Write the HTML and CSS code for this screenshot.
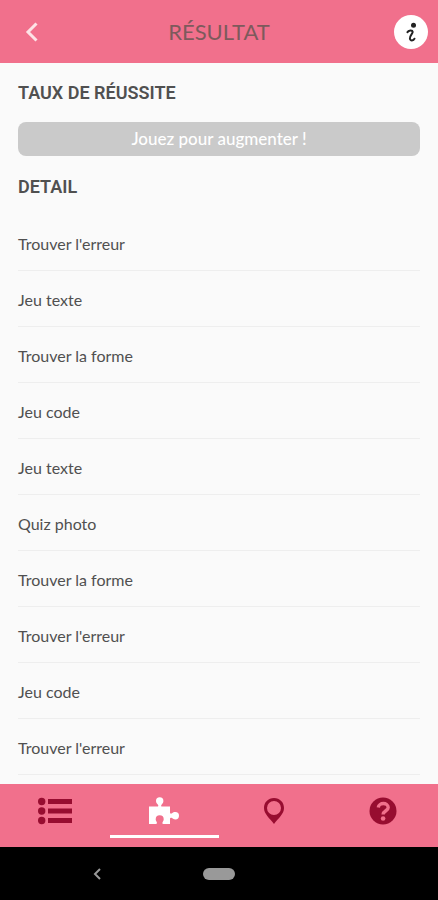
FILE: index.html
```html
<!DOCTYPE html>
<html lang="fr">
<head>
    <meta charset="UTF-8">
    <meta name="viewport" content="width=device-width, initial-scale=1.0">
    <title>Résultat</title>
    <link rel="stylesheet" href="styles.css">
</head>
<body>
    <header class="topbar">
        <button class="iconbtn" type="button" aria-label="Retour">
            <svg width="14" height="20" viewBox="0 0 14 20"><path d="M11.500 1.500 3 10l8.500 8.500" fill="none" stroke="#fde3e6" stroke-width="3"/></svg>
        </button>
        <h1 class="title">RÉSULTAT</h1>
        <button class="iconbtn infobtn" type="button" aria-label="Informations">
            <svg width="34" height="34" viewBox="0 0 34 34">
                <circle cx="17" cy="17" r="17" fill="#fff"/>
                <circle cx="19.500" cy="10.300" r="2.500" fill="#222"/>
                <path d="M13.400 17.200c1-2 5-2.600 5.300-.3.200 1.700-3.200 3.800-2.800 6.600.3 2.600 3.600 2.500 4.600.2" fill="none" stroke="#222" stroke-width="2" stroke-linecap="round"/>
            </svg>
        </button>
    </header>

    <main class="content">
        <h2 class="subtitle">TAUX DE RÉUSSITE</h2>
        <div class="rate">Jouez pour augmenter !</div>
        <h2 class="subtitle">DETAIL</h2>
        <ul class="games">
            <li class="game">Trouver l'erreur</li>
            <li class="game">Jeu texte</li>
            <li class="game">Trouver la forme</li>
            <li class="game">Jeu code</li>
            <li class="game">Jeu texte</li>
            <li class="game">Quiz photo</li>
            <li class="game">Trouver la forme</li>
            <li class="game">Trouver l'erreur</li>
            <li class="game">Jeu code</li>
            <li class="game">Trouver l'erreur</li>
        </ul>
    </main>

    <nav class="tabs">
        <a class="tab" href="#" aria-label="Liste">
            <svg width="34" height="28" viewBox="0 0 34 28" fill="#970d30">
                <circle cx="3.700" cy="4.500" r="3.700"/><circle cx="3.700" cy="14" r="3.700"/><circle cx="3.700" cy="23.500" r="3.700"/>
                <path d="M10 2h24v5H10zM10 11.500h24v5H10zM10 21h24v5H10z"/>
            </svg>
        </a>
        <a class="tab active" href="#" aria-label="Jeux">
            <svg width="30" height="28" viewBox="0 0 30 28" fill="#fff">
                <path d="M0 9.500h8.500c.8 0 1-.8.600-1.600C8.200 6.800 7 5.700 7 4a3.700 3.700 0 0 1 7.400 0c0 1.700-1.200 2.800-2 3.900-.5.800-.3 1.600.6 1.600h8v6c0 1.200 1 1.500 2 .8 1-.8 1.800-1.300 3.300-1.300a3.700 3.700 0 0 1 0 7.400c-1.500 0-2.300-.6-3.300-1.300-1-.7-2-.4-2 .7V27h-6.500c-1.300 0-1.400-1-.8-2 .5-.8 1-1.500 1-2.700a4 4 0 0 0-8 0c0 1.200.5 1.900 1 2.700.5 1 .3 2-1 2H0z"/>
            </svg>
        </a>
        <a class="tab" href="#" aria-label="Carte">
            <svg width="22" height="28" viewBox="0 0 22 28" fill="#970d30">
                <path fill-rule="evenodd" d="M11 1C5.200 1 1 5.400 1 11c0 6 5.500 10 10 16 4.500-6 10-10 10-16 0-5.600-4.200-10-10-10zm0 3a7 7 0 1 1 0 14 7 7 0 0 1 0-14z"/>
            </svg>
        </a>
        <a class="tab" href="#" aria-label="Aide">
            <svg width="28" height="28" viewBox="0 0 28 28">
                <circle cx="14" cy="14" r="13.500" fill="#970d30"/>
                <path d="M9.300 10.500c.5-5.300 9.800-5.300 9.900 0 .1 3.300-4.900 3.200-5.100 7" fill="none" stroke="#f1708c" stroke-width="3.400"/>
                <circle cx="14.100" cy="21.500" r="2.300" fill="#f1708c"/>
            </svg>
        </a>
    </nav>

    <div class="system">
        <button class="iconbtn" type="button" aria-label="Précédent">
            <svg width="8" height="12" viewBox="0 0 8 12"><path d="M7 1 2 6l5 5" fill="none" stroke="#999" stroke-width="2"/></svg>
        </button>
        <button class="iconbtn" type="button" aria-label="Accueil"><span class="pill"></span></button>
    </div>
</body>
</html>
```
FILE: styles.css
```css
* {
    box-sizing: border-box;
}

body {
    margin: 0;
    min-height: 100vh;
    display: flex;
    flex-direction: column;
    background-color: #fafafa;
    color: #505050;
    font-family: Lato, sans-serif;
}

.iconbtn {
    display: flex;
    align-items: center;
    justify-content: center;
    padding: 0;
    border: none;
    background: none;
}

/* top bar */
.topbar {
    display: grid;
    grid-template-columns: 44px 1fr 44px;
    align-items: center;
    height: 63px;
    padding: 0 10px;
    background-color: #f1708c;
}

.infobtn {
    justify-content: flex-end;
}

.title {
    margin: 0;
    text-align: center;
    font-size: 22px;
    font-weight: 400;
    line-height: 28px;
    color: #7d5a5c;
}

/* results */
.content {
    flex: 1;
    padding: 18px 18px 8px;
}

.subtitle {
    margin: 0;
    font-family: Roboto, sans-serif;
    font-size: 18px;
    font-weight: 600;
    line-height: 24px;
}

.rate {
    margin: 17px 0 19px;
    border-radius: 8px;
    background-color: #cacaca;
    color: #fff;
    text-align: center;
    font-size: 17px;
    font-weight: 500;
    line-height: 34px;
}

.games {
    list-style: none;
    margin: 16px 0 0;
    padding: 0;
}

.game {
    padding: 17px 0 14px;
    border-bottom: 1px solid #eee;
    font-size: 16px;
    line-height: 24px;
}

/* bottom tabs */
.tabs {
    display: grid;
    grid-template-columns: repeat(4, 1fr);
    height: 63px;
    padding-bottom: 9px;
    background-color: #f1708c;
}

.tab {
    display: flex;
    align-items: center;
    justify-content: center;
    padding-top: 3px;
    border-bottom: 3px solid transparent;
}

.active {
    border-bottom-color: #fff;
}

/* phone buttons */
.system {
    display: grid;
    grid-template-columns: 1fr 1fr 1fr;
    height: 53px;
    padding: 0 36px;
    background-color: #000;
}

.pill {
    width: 32px;
    height: 12px;
    border-radius: 6px;
    background-color: #999;
}
```
